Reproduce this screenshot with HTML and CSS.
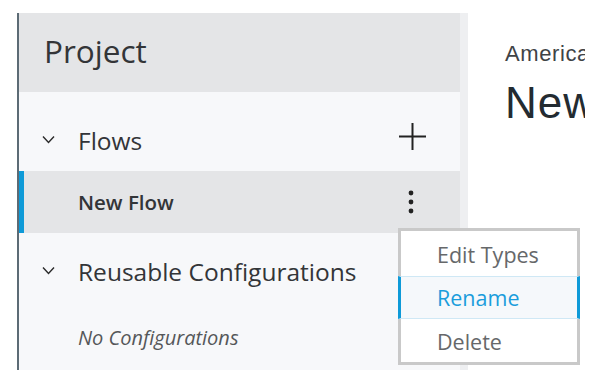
FILE: index.html
```html
<!DOCTYPE html>
<html>
<head>
<meta charset="utf-8">
<link rel="stylesheet" href="styles.css">
</head>
<body>
<div class="page">
  <aside class="sidebar">
    <div class="panel">
      <div class="header">Project</div>
      <div class="section-row">
        <svg class="chev" width="13" height="9" viewBox="0 0 13 9"><polyline points="1,1.5 6.5,7.5 12,1.5" fill="none" stroke="#2a2a2a" stroke-width="1.4"/></svg>
        <span class="section-title">Flows</span>
        <svg class="plus" width="27" height="27" viewBox="0 0 27 27"><path d="M13.5 0V27M0 13.5H27" stroke="#222" stroke-width="2"/></svg>
      </div>
      <div class="item-row selected">
        <span class="item-title">New Flow</span>
        <svg class="kebab" width="6" height="24" viewBox="0 0 6 24"><circle cx="3" cy="3" r="2.4" fill="#222"/><circle cx="3" cy="12" r="2.4" fill="#222"/><circle cx="3" cy="21" r="2.4" fill="#222"/></svg>
      </div>
      <div class="section-row reuse">
        <svg class="chev" width="13" height="9" viewBox="0 0 13 9"><polyline points="1,1.5 6.5,7.5 12,1.5" fill="none" stroke="#2a2a2a" stroke-width="1.4"/></svg>
        <span class="section-title">Reusable Configurations</span>
      </div>
      <div class="empty-row">No Configurations</div>
    </div>
  </aside>
  <main class="main">
    <div class="crumb">American Airlines</div>
    <h1 class="title">New Flow</h1>
  </main>
  <ul class="menu">
    <li class="menu-item">Edit Types</li>
    <li class="menu-item active">Rename</li>
    <li class="menu-item">Delete</li>
  </ul>
</div>
</body>
</html>
```
FILE: styles.css
```css
html, body {
  margin: 0;
  padding: 0;
  background: #ffffff;
}
.page {
  position: relative;
  display: flex;
  padding-top: 13px;
  padding-left: 17px;
  height: 357px;
  width: 568px;
  overflow: hidden;
  font-family: "Open Sans", sans-serif;
}
.sidebar {
  width: 441px;
  height: 357px;
  border-left: 2px solid #5c6b75;
  border-right: 8px solid #eeeff1;
  background: #f7f8fa;
  flex: none;
}
.panel {
  display: flex;
  flex-direction: column;
}
.header {
  height: 79px;
  background: #e4e5e7;
  box-sizing: border-box;
  padding-left: 25px;
  padding-top: 18px;
  font-size: 31.5px;
  line-height: 40px;
  color: #333538;
}
.section-row {
  height: 79px;
  display: flex;
  align-items: center;
  padding-left: 23px;
  padding-right: 34px;
  padding-top: 17px;
  box-sizing: border-box;
}
.chev {
  flex: none;
  margin-right: 23px;
  margin-top: -1px;
}
.section-title {
  font-size: 24.5px;
  color: #333538;
  flex: 1;
}
.plus {
  flex: none;
  margin-top: -8px;
}
.item-row {
  height: 62px;
  display: flex;
  align-items: center;
  box-sizing: border-box;
  padding-left: 54px;
  padding-right: 46px;
  background: #e4e5e7;
  border-left: 5px solid #0e9ad8;
}
.item-title {
  flex: 1;
  font-size: 20.5px;
  font-weight: 600;
  color: #333538;
}
.reuse {
  height: 74px;
  padding-top: 2px;
}
.empty-row {
  padding-left: 59px;
  padding-top: 17px;
  font-size: 20px;
  font-style: italic;
  color: #555759;
}
.main {
  width: 117px;
  overflow: hidden;
  padding-left: 37px;
  box-sizing: border-box;
  font-family: "Liberation Sans", Arial, sans-serif;
  white-space: nowrap;
}
.crumb {
  margin-top: 28px;
  font-size: 22px;
  letter-spacing: 0.6px;
  color: #3f4346;
}
.title {
  margin: 12px 0 0 0;
  font-size: 44px;
  font-weight: normal;
  letter-spacing: 1px;
  color: #232b31;
  line-height: 48px;
}
.menu {
  position: absolute;
  left: 398px;
  top: 228px;
  width: 176px;
  margin: 0;
  padding: 0;
  list-style: none;
  background: #ffffff;
  border: 3px solid #c9c9c9;
}
.menu-item {
  height: 43px;
  box-sizing: border-box;
  padding-left: 36px;
  font-size: 21.5px;
  line-height: 46px;
  color: #66686a;
}
.menu-item:first-child {
  height: 45px;
  line-height: 48px;
}
.menu-item.active {
  margin: 0 -3px;
  padding-left: 36px;
  border-left: 3px solid #0e9ad8;
  border-right: 3px solid #0e9ad8;
  border-top: 1px solid #cfe8f5;
  border-bottom: 1px solid #cfe8f5;
  background: #f5f8fb;
  color: #1a9ddc;
  line-height: 42px;
}
```
